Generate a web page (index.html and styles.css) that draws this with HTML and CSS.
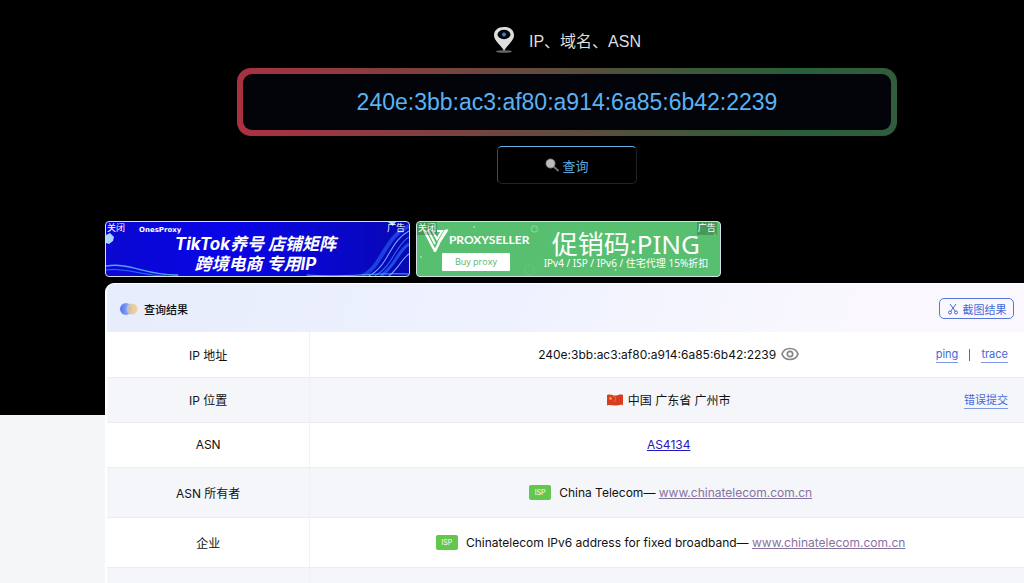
FILE: index.html
```html
<!DOCTYPE html>
<html lang="zh-CN">
<head>
	<meta charset="utf-8">
	<meta name="viewport" content="width=device-width, initial-scale=1">
	<title>IP 查询</title>
	<link rel="stylesheet" href="styles.css">
</head>
<body>
	<div class="content">
		<!-- 查询表单 -->
		<form class="search">
			<label class="search-title" for="ip">
				<svg class="pin" viewBox="0 0 22 28" aria-hidden="true">
					<ellipse cx="11" cy="25.500" rx="8" ry="1.300" fill="#666"/>
					<path d="M11 25C9 20 1 15 1 9.500C1 4 5 1 11 1s10 3 10 8.500C21 15 13 20 11 25z" fill="#dedede"/>
					<ellipse cx="11" cy="8.500" rx="6.500" ry="4.700" fill="#05070a"/>
					<circle cx="11" cy="8.500" r="2" fill="#3d82c8"/>
				</svg>
				<span>IP、域名、ASN</span>
			</label>
			<div class="search-box">
				<input type="text" id="ip" value="240e:3bb:ac3:af80:a914:6a85:6b42:2239">
			</div>
			<button type="submit" class="search-btn">
				<svg class="glass" viewBox="0 0 14 14" aria-hidden="true">
					<path d="M8 8l5 4.500" stroke="#6d6d6d" stroke-width="2" stroke-linecap="round"/>
					<circle cx="5.500" cy="5.500" r="4.500" fill="#bdbdbd" stroke="#8a8a8a"/>
				</svg>
				<span>查询</span>
			</button>
		</form>

		<!-- 广告 -->
		<div class="ads">
			<div class="ad ad-blue">
				<svg class="ad-bg" viewBox="0 0 302 54" preserveAspectRatio="none" aria-hidden="true">
					<g fill="none" stroke="#2f6df0">
						<path d="M0 44C25 40 40 54 72 53" stroke="#58a2f5" stroke-width="1.500"/>
						<path d="M0 48C20 45 35 54 60 54"/>
						<path d="M255 54C275 46 278 14 302 4" stroke="#2459f0" stroke-width="4" opacity=".7"/>
						<path d="M262 54C282 44 282 20 302 9" stroke="#6fb4ff"/>
						<path d="M268 54C286 44 288 24 302 15"/>
						<path d="M274 54C290 42 290 30 302 22" stroke="#2a6af5" stroke-width="3" opacity=".7"/>
						<path d="M200 53C240 56 270 50 302 52" stroke="#58a2f5"/>
						<path d="M282 54C292 46 294 38 302 32" stroke="#6fb4ff"/>
					</g>
					<path d="M0 13l4-2 4 4-1 4-4 3-3-1z" fill="#a9d4ff"/>
					<path d="M281 0l8 0-3 4z" fill="#a9d4ff"/>
				</svg>
				<span class="ad-close">关闭</span>
				<span class="ad-mark">广告</span>
				<div class="ones-logo">OnesProxy</div>
				<div class="ones-text">TikTok养号 店铺矩阵<br>跨境电商 专用IP</div>
			</div>
			<div class="ad ad-green">
				<svg class="ad-bg" viewBox="0 0 302 54" preserveAspectRatio="none" aria-hidden="true">
					<g fill="none" stroke="#8ad69b">
						<circle cx="117" cy="7" r="3"/>
						<circle cx="112" cy="48" r="5" stroke="#69c47c"/>
					</g>
					<g fill="#a5e0b1">
						<circle cx="57" cy="5" r="1"/>
						<circle cx="4" cy="35" r="1"/>
						<circle cx="198" cy="48" r="1"/>
						<circle cx="297" cy="12" r="1"/>
					</g>
				</svg>
				<span class="ad-close">关闭</span>
				<span class="ad-mark">广告</span>
				<div class="seller">
					<div class="seller-name">
						<svg class="seller-logo" viewBox="0 0 26 24" aria-hidden="true">
							<g fill="none" stroke="#fff" stroke-width="2">
								<path d="M1 2l11 21 4-8" stroke-width="2.500"/>
								<path d="M5 2l7 14"/>
								<path d="M9 2l5 9 5-8h-5"/>
								<path d="M25 2h-3l-7 12 1 2z" fill="#fff" stroke-width="1"/>
							</g>
						</svg>
						<span>PROXYSELLER</span>
					</div>
					<button type="button" class="buy">Buy proxy</button>
				</div>
				<div class="promo">
					<div class="promo-code">促销码:PING</div>
					<div class="promo-text">IPv4 / ISP / IPv6 / 住宅代理 15%折扣</div>
				</div>
			</div>
		</div>

		<!-- 查询结果 -->
		<div class="result">
			<div class="result-head">
				<svg class="dots" viewBox="0 0 18 12" aria-hidden="true">
					<defs>
						<linearGradient id="blue"><stop offset="0" stop-color="#4f76f6"/><stop offset="1" stop-color="#a9bdf5"/></linearGradient>
						<linearGradient id="gold"><stop offset="0" stop-color="#c9c5b8"/><stop offset="1" stop-color="#fbc97a"/></linearGradient>
					</defs>
					<circle cx="6" cy="6" r="6" fill="url(#blue)"/>
					<circle cx="12" cy="6" r="5.500" fill="url(#gold)" opacity=".85"/>
				</svg>
				<h2>查询结果</h2>
				<button type="button" class="shot">
					<svg class="cut" viewBox="0 0 12 12" aria-hidden="true">
						<g fill="none" stroke="#4468d8">
							<path d="M3 1l5.500 7.500M9 1L3.500 8.500"/>
							<circle cx="3" cy="9.500" r="1.500"/>
							<circle cx="9" cy="9.500" r="1.500"/>
						</g>
					</svg>
					<span>截图结果</span>
				</button>
			</div>
			<table>
				<tr>
					<th>IP 地址</th>
					<td>
						<div class="cell">
							<span>240e:3bb:ac3:af80:a914:6a85:6b42:2239</span>
							<svg class="eye" viewBox="0 0 18 14" aria-hidden="true">
								<g fill="none" stroke="#858585" stroke-width="1.700">
									<path d="M1 7c1.200-3.500 4.300-5.500 8-5.500s6.800 2 8 5.500c-1.200 3.500-4.300 5.500-8 5.500S2.200 10.500 1 7z"/>
									<circle cx="9" cy="7" r="2.700"/>
								</g>
							</svg>
						</div>
						<div class="links"><a href="#">ping</a><span class="bar"></span><a href="#">trace</a></div>
					</td>
				</tr>
				<tr>
					<th>IP 位置</th>
					<td>
						<div class="cell">
							<svg class="flag" viewBox="0 0 16 12" aria-hidden="true">
								<path d="M0 1c4-1.500 6 1 9 .5S14 0 16 1v10c-3-1-5 .5-8 .5S3 10.500 0 11.500z" fill="#d83a22"/>
								<path d="M3.500 2.500l.5 1.300h1.400l-1.100.8.4 1.400-1.200-.8-1.200.8.4-1.400-1.100-.8H3z" fill="#f6c943"/>
								<path d="M6.500 2h1v1h-1zM8 3.500h1v1H8zM8 5.500h1v1H8zM6.500 7h1v1h-1z" fill="#ec9a35"/>
							</svg>
							<span>中国 广东省 广州市</span>
						</div>
						<div class="links"><a href="#">错误提交</a></div>
					</td>
				</tr>
				<tr>
					<th>ASN</th>
					<td><div class="cell"><a class="asn" href="#">AS4134</a></div></td>
				</tr>
				<tr class="tall">
					<th>ASN 所有者</th>
					<td><div class="cell owner"><span class="isp">ISP</span><span>China Telecom— <a href="#">www.chinatelecom.com.cn</a></span></div></td>
				</tr>
				<tr class="tall">
					<th>企业</th>
					<td><div class="cell owner"><span class="isp">ISP</span><span>Chinatelecom IPv6 address for fixed broadband— <a href="#">www.chinatelecom.com.cn</a></span></div></td>
				</tr>
				<tr class="tall">
					<th></th>
					<td></td>
				</tr>
			</table>
		</div>
	</div>
</body>
</html>
```
FILE: styles.css
```css
* {
	box-sizing: border-box;
	margin: 0;
	padding: 0;
}
body {
	background: linear-gradient(#000 415px, #f4f6f8 415px);
	font-family: "Liberation Sans", "Noto Sans CJK SC", sans-serif;
	font-size: 13px;
	color: #111;
	height: 100vh;
	overflow: hidden;
}
input, button {
	font-family: inherit;
}
.content {
	margin-left: 105px;
	/* 结果面板略宽于窗口 */
	margin-right: -5px;
}

/* 查询表单 */
.search {
	display: flex;
	flex-direction: column;
	align-items: center;
	padding-top: 24px;
}
.search-title {
	display: flex;
	align-items: center;
	gap: 14px;
	height: 32px;
	color: #dedede;
	font-size: 16px;
}
.pin {
	width: 22px;
	height: 28px;
}
.search-box {
	width: 72%;
	max-width: 660px;
	height: 68px;
	margin-top: 12px;
	padding: 6px;
	border-radius: 14px;
	background: linear-gradient(75deg, #ad3040, #26603a 85%, #335c3c);
}
.search-box input {
	width: 100%;
	height: 100%;
	border: 0;
	border-radius: 9px;
	outline: 0;
	background: #020409;
	color: #5ab2f2;
	font-size: 23px;
	text-align: center;
}
.search-btn {
	display: flex;
	align-items: center;
	justify-content: center;
	gap: 3px;
	width: 140px;
	height: 38px;
	margin-top: 10px;
	border: 1px solid;
	border-color: #5eaede #1c2429 #1c2429 #2f5263;
	border-radius: 5px;
	background: #000;
	color: #5aa9dc;
	font-size: 13px;
}
.glass {
	width: 14px;
	height: 14px;
}

/* 广告 */
.ads {
	display: flex;
	gap: 6px;
	margin-top: 37px;
}
.ad {
	position: relative;
	width: 33%;
	height: 56px;
	border: 1px solid #d5e0e8;
	border-radius: 4px;
	overflow: hidden;
	color: #fff;
}
.ad-blue {
	background: linear-gradient(90deg, #0a08d0, #0905e8 40%, #0808b4);
}
.ad-green {
	display: flex;
	background: #58bf70;
}
.ad-bg {
	position: absolute;
	top: 0;
	left: 0;
	width: 100%;
	height: 100%;
}
.ad-close, .ad-mark {
	position: absolute;
	z-index: 1;
	top: 0;
	padding: 0 1px;
	background: rgba(0, 0, 0, .2);
	font-size: 9px;
	line-height: 13px;
}
.ad-blue .ad-close, .ad-blue .ad-mark {
	background: none;
}
.ad-close {
	left: 0;
}
.ad-mark {
	right: 3px;
}
.ones-logo {
	position: relative;
	padding: 4px 0 0 33px;
	font: bold 7px/8px "DejaVu Sans", sans-serif;
}
.ones-text {
	position: relative;
	padding-right: 4px;
	font: italic bold 17px/20px Inter, "Noto Sans CJK SC", sans-serif;
	text-align: center;
}
.seller {
	position: relative;
	width: 40%;
	padding: 5px 0 0 6px;
}
.seller-name {
	display: flex;
	align-items: center;
	font: bold 12px/26px Lato, sans-serif;
}
.seller-logo {
	flex: none;
	width: 26px;
	height: 24px;
}
.buy {
	display: block;
	width: 68px;
	height: 18px;
	margin-left: 19px;
	border: 0;
	border-radius: 1px;
	background: #fff;
	color: #58b56d;
	font: 9px/18px "Open Sans", sans-serif;
}
.promo {
	position: relative;
	flex: 1;
	padding: 9px 6px 0 0;
	font-family: "Noto Sans", "Noto Sans CJK SC", sans-serif;
	text-align: center;
	white-space: nowrap;
}
.promo-code {
	font-size: 26px;
	line-height: 26px;
}
.promo-text {
	font-size: 10px;
	line-height: 12px;
}

/* 查询结果 */
.result {
	margin-top: 6px;
	border-left: 2px solid #fff;
	border-top: 1px solid #fff;
	border-radius: 9px 0 0 0;
	background: #fff;
	overflow: hidden;
}
.result-head {
	display: flex;
	align-items: center;
	gap: 6px;
	height: 48px;
	padding: 1px 15px 0 13px;
	background: linear-gradient(110deg, #e7edfc, #eff2fe 45%, #faf8fe 80%);
}
.result-head h2 {
	font-size: 11px;
	font-weight: 500;
}
.dots {
	width: 18px;
	height: 12px;
}
.shot {
	display: flex;
	align-items: center;
	justify-content: center;
	gap: 4px;
	width: 75px;
	height: 21px;
	margin-left: auto;
	border: 1px solid #5877d8;
	border-radius: 5px;
	background: transparent;
	color: #4468d8;
	font-size: 11px;
}
.cut {
	width: 12px;
	height: 12px;
}
table {
	width: 100%;
	border-collapse: collapse;
	table-layout: fixed;
	font-family: Inter, "Noto Sans CJK SC", sans-serif;
	font-size: 12px;
}
tr {
	height: 45px;
	border-bottom: 1px solid #ebedf0;
}
tr:nth-child(even) {
	background: #f5f6fa;
}
.tall {
	height: 50px;
}
th {
	width: 22%;
	border-right: 1px solid #f0f1f4;
	font-weight: normal;
}
td {
	position: relative;
}
.cell {
	display: flex;
	align-items: center;
	justify-content: center;
	gap: 5px;
	padding-right: 2px;
}
.eye {
	width: 18px;
	height: 14px;
}
.flag {
	width: 16px;
	height: 12px;
}
/* 行右侧的操作链接 */
.links {
	position: absolute;
	top: 14px;
	right: 21px;
	display: flex;
	align-items: center;
	gap: 11px;
	font-size: 11px;
	line-height: 16px;
}
.links a {
	border-bottom: 1px solid #7d98e6;
	color: #4468d8;
	text-decoration: none;
}
.bar {
	width: 1px;
	height: 12px;
	background: #4468d8;
}
.asn {
	color: #2a17b8;
}
.owner {
	gap: 8px;
	padding-left: 4px;
}
.owner a {
	color: #85739f;
}
.isp {
	width: 22px;
	border-radius: 2px;
	background: #63c74d;
	color: #fff;
	font-size: 7px;
	line-height: 15px;
	text-align: center;
}
```
